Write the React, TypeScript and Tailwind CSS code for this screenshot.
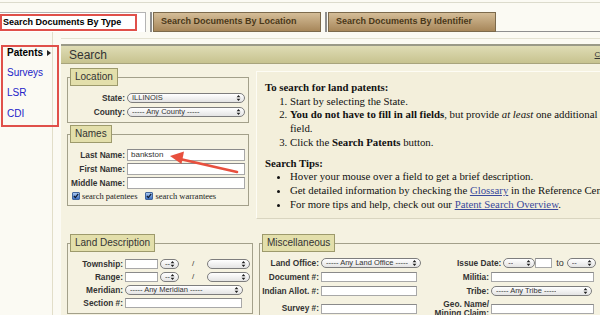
import React from "react"

function Arrows() {
  return (
    <svg width="5" height="8" viewBox="0 0 5 8" className="shrink-0">
      <path d="M0.6 3.3 L2.5 0.9 L4.4 3.3Z M0.6 4.7 L2.5 7.1 L4.4 4.7Z" fill="#222" />
    </svg>
  )
}

function Select({ text, className }: { text: string; className: string }) {
  return (
    <div
      className={`flex h-[10px] shrink-0 items-center justify-between overflow-hidden rounded-full border border-[#7d7d7d] bg-gradient-to-b from-white to-[#e4e4e4] pl-[4px] pr-[3px] text-[7.5px] leading-none text-[#333] ${className}`}
    >
      <span className="truncate">{text}</span>
      <Arrows />
    </div>
  )
}

function Input({ className, value }: { className: string; value?: string }) {
  return (
    <div
      className={`flex shrink-0 items-center border border-[#a8a8a8] border-t-[#8a8a8a] bg-white pl-[3px] text-[8px] leading-none text-[#333] ${className}`}
    >
      {value}
    </div>
  )
}

function Label({ children }: { children: React.ReactNode }) {
  return (
    <div className="whitespace-nowrap text-right text-[8.3px] font-bold leading-none text-[#333]">{children}</div>
  )
}

function Legend({ children }: { children: React.ReactNode }) {
  return (
    <legend className="flex h-[18px] items-center border border-[#9d9a6c] bg-[#e3dfab] px-[4px] text-[10px] leading-none text-[#333]">
      {children}
    </legend>
  )
}

function Check() {
  return (
    <span className="flex h-[8px] w-[8px] items-center justify-center rounded-[1px] border border-[#40659c] bg-gradient-to-b from-[#a9c8f0] to-[#3d70c2]">
      <svg width="6" height="6" viewBox="0 0 6 6">
        <path d="M0.9 3 L2.4 4.6 L5.2 0.9" stroke="#0e1a2e" strokeWidth="1.2" fill="none" />
      </svg>
    </span>
  )
}

export default function App() {
  return (
    <div className="relative h-[315px] w-[600px] overflow-hidden bg-[#fbfaf3] font-['Liberation_Sans',Arial,sans-serif]">
      {/* top rule */}
      <div className="h-[3px] border-b border-[#dcdbcc]" />

      {/* tabs */}
      <div className="mt-[9px] flex h-[20px]">
        <div className="w-[146px] shrink-0 border-r border-t border-[#b4b4b4] bg-white pt-[1px]">
          <div className="flex h-[17px] w-[137px] items-center border-2 border-[#e0504a] pl-[1px] text-[9px] font-bold text-black">
            Search Documents By Type
          </div>
        </div>
        <div className="ml-[4px] flex w-[171px] shrink-0 items-center border-l-2 border-[#8d8d8d] pl-[1px]">
          <div className="flex h-full w-full items-center border border-[#7c6a4c] bg-gradient-to-b from-[#d4bd98] to-[#a7875a] pl-[7px] text-[9px] font-bold text-[#4a3819]">
            Search Documents By Location
          </div>
        </div>
        <div className="ml-[4px] flex w-[171px] shrink-0 items-center border-l-2 border-[#8d8d8d] pl-[1px]">
          <div className="flex h-full w-full items-center border border-[#7c6a4c] bg-gradient-to-b from-[#d4bd98] to-[#a7875a] pl-[7px] text-[9px] font-bold text-[#4a3819]">
            Search Documents By Identifier
          </div>
        </div>
        <div className="flex-1 border-b border-[#8f8f8f]" />
      </div>

      <div className="flex">
        {/* sidebar */}
        <div className="w-[53px] shrink-0 border-r border-[#e2dec9] pl-[7px] pt-[16px] text-[10px] leading-none">
          <div className="flex items-center justify-between pr-[1px] font-bold text-black">
            Patents
            <svg width="4" height="6" viewBox="0 0 4 6">
              <path d="M0 0 L4 3 L0 6Z" fill="#222" />
            </svg>
          </div>
          <div className="mt-[10px] text-[#2323c8]">Surveys</div>
          <div className="mt-[10px] text-[#2323c8]">LSR</div>
          <div className="mt-[11px] text-[#2323c8]">CDI</div>
        </div>

        {/* main panel */}
        <div className="ml-[8px] mt-[6px] w-[560px] shrink-0 border-t border-[#e4e2d2] pt-[5px]">
          <div className="flex h-[20px] items-center justify-between border-b border-t-2 border-[#9a9a88] border-b-[#a8a47c] bg-gradient-to-b from-[#dfdcb5] to-[#c7c38f] pl-[8px] pr-[6px]">
            <span className="text-[12px] text-[#333]">Search</span>
            <span className="text-[8px] text-[#333] underline">Close</span>
          </div>

          <div className="grid h-[260px] grid-cols-[182px_1fr] gap-x-[7px] gap-y-[14px] bg-[#f5f2e1] pl-[6px] pt-[4px]">
            {/* left column */}
            <div className="flex flex-col gap-[2px]">
              <fieldset className="border border-[#a3a08a] px-[2px] pb-[5px]">
                <Legend>Location</Legend>
                <div className="grid grid-cols-[55px_118px] items-center gap-x-[2px] gap-y-[4px] pt-[7px]">
                  <Label>State:</Label>
                  <Select text="ILLINOIS" className="w-[118px]" />
                  <Label>County:</Label>
                  <Select text="----- Any County -----" className="w-[118px]" />
                </div>
              </fieldset>

              <fieldset className="border border-[#a3a08a] px-[2px] pb-[4px]">
                <Legend>Names</Legend>
                <div className="grid grid-cols-[55px_118px] items-center gap-x-[2px] gap-y-[2px] pt-[6px]">
                  <Label>Last Name:</Label>
                  <Input className="h-[12px] w-[118px]" value="bankston" />
                  <Label>First Name:</Label>
                  <Input className="h-[12px] w-[118px]" />
                  <Label>Middle Name:</Label>
                  <Input className="h-[12px] w-[118px]" />
                </div>
                <div className="mt-[3px] flex items-center pl-[2px] font-['Liberation_Serif',serif] text-[8.5px] leading-none text-[#222]">
                  <Check />
                  <span className="ml-[2px]">search patentees</span>
                  <span className="ml-[8px]">
                    <Check />
                  </span>
                  <span className="ml-[2px]">search warrantees</span>
                </div>
              </fieldset>
            </div>

            {/* info */}
            <div className="mt-[3px] h-[148px] w-[360px] border border-[#fdfcf4] border-b-[#d9d5c0] bg-[#f3efdb] pl-[8px] pt-[9px] font-['Liberation_Serif',serif] text-[10.8px] leading-[13.7px] text-[#111]">
              <div className="font-bold">To search for land patents:</div>
              <ol className="list-decimal pl-[25px]">
                <li>Start by selecting the State.</li>
                <li>
                  <b>You do not have to fill in all fields</b>, but provide <i>at least</i> one additional field.
                </li>
                <li>
                  Click the <b>Search Patents</b> button.
                </li>
              </ol>
              <div className="mt-[7px] font-bold">Search Tips:</div>
              <ul className="list-disc whitespace-nowrap pl-[25px]">
                <li>Hover your mouse over a field to get a brief description.</li>
                <li>
                  Get detailed information by checking the <span className="text-[#3a4a9c] underline">Glossary</span> in the Reference Center.
                </li>
                <li>
                  For more tips and help, check out our{" "}
                  <span className="text-[#3a4a9c] underline">Patent Search Overview</span>.
                </li>
              </ul>
            </div>

            {/* land description */}
            <fieldset className="self-start border border-[#a3a08a] px-[2px] pb-[5px]">
              <Legend>Land Description</Legend>
              <div className="grid grid-cols-[53px_1fr] items-center gap-x-[2px] gap-y-[3px] pt-[7px]">
                <Label>Township:</Label>
                <div className="flex items-center">
                  <Input className="h-[10px] w-[33px]" />
                  <Select text="--" className="ml-[2px] w-[19px] pl-[3px]" />
                  <span className="mx-[13px] text-[8px] leading-none text-[#333]">/</span>
                  <Select text="" className="w-[43px]" />
                </div>
                <Label>Range:</Label>
                <div className="flex items-center">
                  <Input className="h-[10px] w-[33px]" />
                  <Select text="--" className="ml-[2px] w-[19px] pl-[3px]" />
                  <span className="mx-[13px] text-[8px] leading-none text-[#333]">/</span>
                  <Select text="" className="w-[43px]" />
                </div>
                <Label>Meridian:</Label>
                <Select text="----- Any Meridian -----" className="w-[118px]" />
                <Label>Section #:</Label>
                <Input className="h-[10px] w-[117px]" />
              </div>
            </fieldset>

            {/* miscellaneous */}
            <fieldset className="ml-[3px] self-start border border-[#a3a08a] px-[2px] pb-[5px]">
              <Legend>Miscellaneous</Legend>
              <div className="grid grid-cols-[57px_100px_66px_110px] items-center gap-x-[2px] gap-y-[4px] pt-[6px]">
                <Label>Land Office:</Label>
                <Select text="----- Any Land Office -----" className="w-[100px]" />
                <div className="col-span-2 flex items-center pl-[34px]">
                  <Label>Issue Date:</Label>
                  <Select text="--" className="ml-[2px] w-[32px]" />
                  <Input className="h-[10px] w-[17px]" />
                  <span className="ml-[4px] mr-[3px] text-[9px] leading-none text-[#333]">to</span>
                  <Select text="--" className="w-[29px] pl-[3px]" />
                </div>
                <Label>Document #:</Label>
                <Input className="h-[10px] w-[96px]" />
                <Label>Militia:</Label>
                <Input className="h-[10px] w-[103px]" />
                <Label>Indian Allot. #:</Label>
                <Input className="h-[10px] w-[96px]" />
                <Label>Tribe:</Label>
                <Select text="----- Any Tribe -----" className="w-[101px]" />
                <Label>Survey #:</Label>
                <Input className="h-[10px] w-[96px]" />
                <Label>
                  Geo. Name/
                  <br />
                  Mining Claim:
                </Label>
                <Input className="h-[10px] w-[103px]" />
              </div>
            </fieldset>
          </div>
        </div>
      </div>

      {/* annotations */}
      <div className="pointer-events-none absolute left-[1px] top-[45px] h-[82px] w-[58px] border-2 border-[#e0504a]" />
      <svg className="pointer-events-none absolute left-0 top-0" width="600" height="315">
        <line x1="237" y1="172" x2="180" y2="159" stroke="#e8503e" strokeWidth="2.6" strokeLinecap="round" />
        <path d="M170 156 L184 151.5 L181.5 164Z" fill="#e8503e" />
      </svg>
    </div>
  )
}
